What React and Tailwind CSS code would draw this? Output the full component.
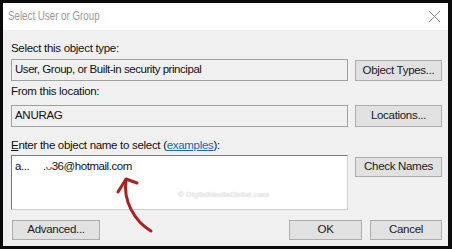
import React from "react";

const font = { fontFamily: '"Liberation Sans", Arial, sans-serif' };

function Btn({ children, className = "" }) {
  return (
    <div
      className={
        "flex items-center justify-center border border-[#adadad] bg-[#e1e1e1] text-[11.5px] tracking-[-0.3px] text-[#1a1a1a] " +
        className
      }
    >
      {children}
    </div>
  );
}

export default function App() {
  return (
    <div
      className="relative w-[452px] h-[249px] bg-[#0a0a0a] pt-[3px] pl-[3px] pr-[4px] pb-[3px] flex flex-col overflow-hidden"
      style={font}
    >
      <div className="h-[27px] bg-white flex items-center justify-between pl-[5px] pr-[6px] shrink-0">
        <span className="inline-block origin-left scale-x-[0.78] text-[12.5px] text-[#9a9a9a] leading-none whitespace-nowrap">
          Select User or Group
        </span>
        <svg width="13" height="13" viewBox="0 0 13 13" className="mr-[1px]">
          <path d="M1 1 L12 12 M12 1 L1 12" stroke="#8a8a8a" strokeWidth="1" fill="none" />
        </svg>
      </div>
      <div className="flex-1 bg-[#f0f0f0] pl-[8px] pr-[6px] pt-[11px] flex flex-col text-[11.5px] tracking-[-0.3px] text-[#111]">
        <div className="h-[15px] leading-[15px]">Select this object type:</div>
        <div className="mt-[3px] flex gap-[7px] h-[22px]">
          <div className="w-[337px] border border-[#a0a0a0] bg-[#f0f0f0] flex items-center px-[3px] leading-none tracking-[-0.45px]">
            User, Group, or Built-in security principal
          </div>
          <Btn className="w-[87px] mt-[1px] h-[21px]">Object Types...</Btn>
        </div>
        <div className="mt-[3px] h-[15px] leading-[15px]">From this location:</div>
        <div className="mt-[6px] flex gap-[7px] h-[22px]">
          <div className="w-[337px] border border-[#a0a0a0] bg-[#f0f0f0] flex items-center px-[3px] leading-none">
            ANURAG
          </div>
          <Btn className="w-[87px] h-[22px]">Locations...</Btn>
        </div>
        <div className="mt-[11px] h-[15px] leading-[15px]">
          <span className="underline">E</span>nter the object name to select (
          <span className="text-[#1a66b3] underline">examples</span>):
        </div>
        <div className="mt-[2px] flex gap-[7px]">
          <div className="relative w-[337px] h-[55px] border border-[#7a7a7a] border-b-[#cfcfcf] border-r-[#cfcfcf] bg-white px-[3px] pt-[3px] whitespace-pre leading-[14px] tracking-[-0.45px]">
            <span>a...</span>
            <span>{"     "}</span>
            <span>.</span>
            <span className="text-[#555]">ᴗ</span>
            <span>36@hotmail.com</span>
            <div className="absolute left-[166px] top-[35px] text-[8px] tracking-normal leading-none text-white [text-shadow:0_0_1px_#9a9a9a]">
              © DigitalMediaGlobe.com
            </div>
          </div>
          <Btn className="w-[87px] h-[20px] mt-[2px]">Check Names</Btn>
        </div>
        <div className="mt-[10px] flex items-start">
          <Btn className="w-[88px] h-[20px] ml-[1px]">Advanced...</Btn>
          <div className="flex-1" />
          <Btn className="w-[73px] h-[20px]">OK</Btn>
          <Btn className="w-[72px] h-[20px] ml-[8px]">Cancel</Btn>
        </div>
      </div>
      <svg
        className="absolute left-0 top-0 pointer-events-none"
        width="452"
        height="249"
        viewBox="0 0 452 249"
      >
        <path
          d="M126 181 C 123 200, 134 221, 151 231"
          stroke="#a8201f"
          strokeWidth="3"
          fill="none"
          strokeLinecap="round"
        />
        <path
          d="M118 192 L126 179 L137 183"
          stroke="#a8201f"
          strokeWidth="3"
          fill="none"
          strokeLinecap="round"
          strokeLinejoin="round"
        />
      </svg>
    </div>
  );
}
